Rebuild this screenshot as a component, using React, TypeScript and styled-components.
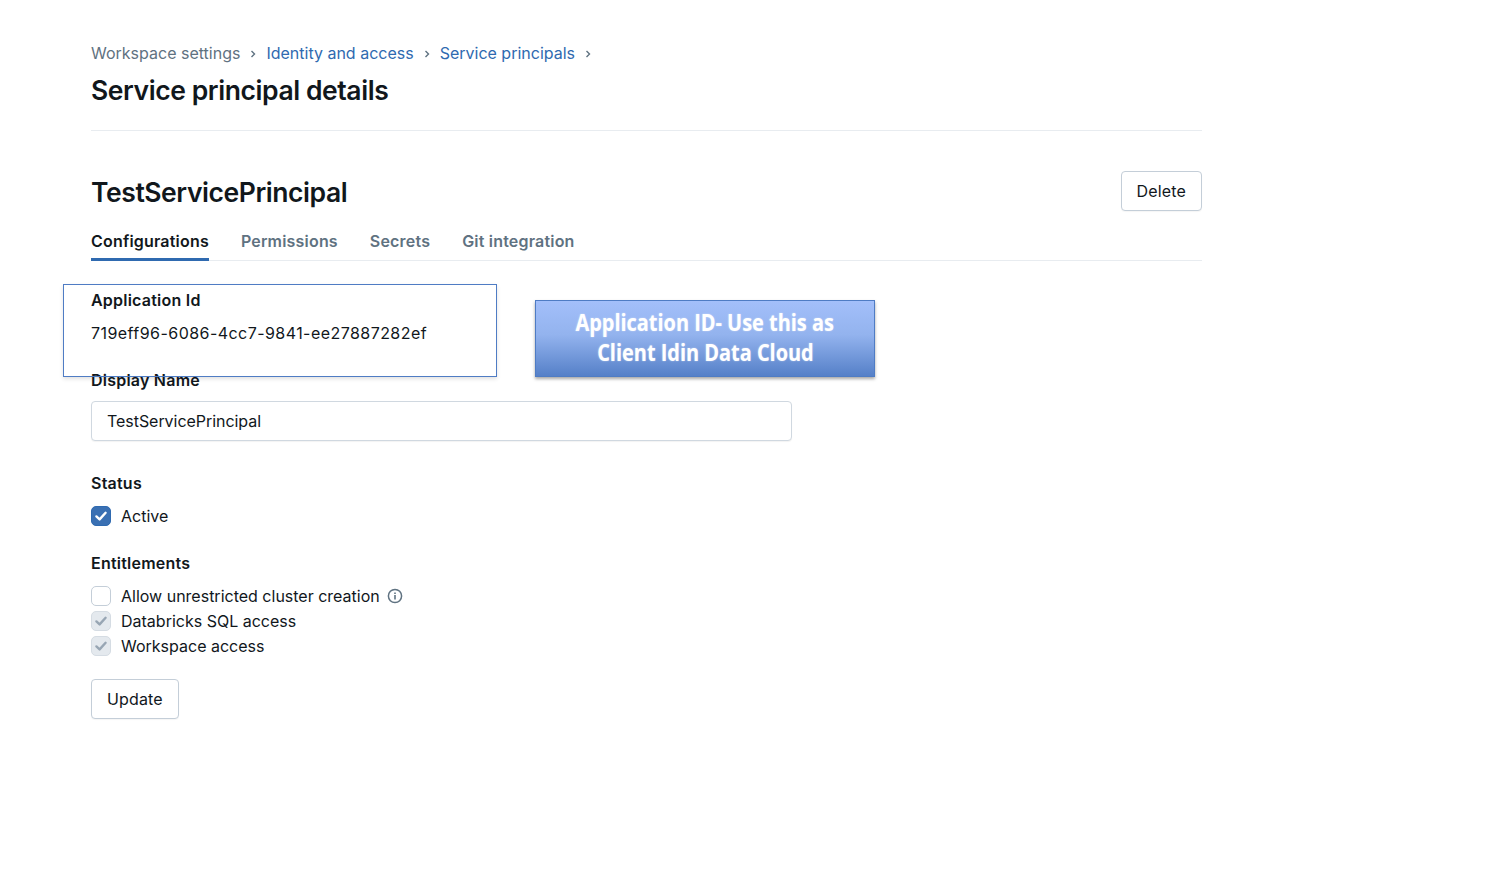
import React from "react";
import styled, { createGlobalStyle } from "styled-components";

const GlobalStyle = createGlobalStyle`
  html, body {
    margin: 0;
    padding: 0;
    background: #fff;
    font-family: "Inter", "Liberation Sans", sans-serif;
    color: #11171c;
  }
`;

const Page = styled.div`
  position: relative;
  box-sizing: border-box;
  width: 1490px;
  min-height: 884px;
  padding: 43px 288px 0 91px;
`;

const Breadcrumbs = styled.nav`
  display: flex;
  align-items: center;
  height: 20px;
  font-size: 16px;
  line-height: 20px;
`;

const Crumb = styled.span<{ $link?: boolean }>`
  color: ${(p) => (p.$link ? "#2f6ab0" : "#5f7281")};
`;

const CrumbSep = styled.svg`
  width: 8px;
  height: 8px;
  margin: 1px 9px 0 9px;
  fill: none;
  stroke: #5f7281;
  stroke-width: 1.4;
`;

const PageTitle = styled.h1`
  margin: 10px 0 0;
  font-size: 26.5px;
  line-height: 34px;
  font-weight: 600;
  letter-spacing: -0.016em;
`;

const Divider = styled.div`
  height: 1px;
  margin-top: 23px;
  background: #e8ecf0;
`;

const Header = styled.div`
  display: flex;
  align-items: center;
  justify-content: space-between;
  margin-top: 40px;
`;

const Name = styled.h2`
  margin: 1px 0 0;
  font-size: 26.5px;
  line-height: 38px;
  font-weight: 600;
  letter-spacing: -0.016em;
`;

const Button = styled.button`
  box-sizing: border-box;
  height: 40px;
  padding: 0 15px;
  background: #fff;
  border: 1px solid #c4ced8;
  border-radius: 4px;
  box-shadow: 0 1px 1px rgba(0, 0, 0, 0.04);
  font-family: inherit;
  font-size: 16px;
  letter-spacing: 0.01em;
  color: #11171c;
`;

const Tabs = styled.div`
  display: flex;
  gap: 32px;
  margin-top: 10px;
  height: 39px;
  border-bottom: 1px solid #e8ecf0;
`;

const Tab = styled.div<{ $active?: boolean }>`
  box-sizing: border-box;
  height: 40px;
  padding-top: 10px;
  font-size: 16px;
  line-height: 20px;
  font-weight: 600;
  letter-spacing: 0.012em;
  color: ${(p) => (p.$active ? "#11171c" : "#5f7281")};
  border-bottom: 3px solid ${(p) => (p.$active ? "#2f6ab0" : "transparent")};
`;

const Label = styled.div`
  font-size: 16px;
  line-height: 20px;
  font-weight: 600;
  letter-spacing: 0.014em;
`;

const IdSection = styled.section`
  margin-top: 29px;
`;

const IdValue = styled.div`
  margin-top: 13px;
  font-size: 16px;
  line-height: 20px;
  letter-spacing: 0.028em;
`;

const NameSection = styled.section`
  margin-top: 27px;
`;

const TextField = styled.input`
  display: block;
  box-sizing: border-box;
  width: 701px;
  height: 40px;
  margin-top: 11px;
  padding: 0 15px;
  border: 1px solid #d0d8e0;
  border-radius: 4px;
  box-shadow: 0 1px 1px rgba(0, 0, 0, 0.05);
  font-family: inherit;
  font-size: 16px;
  letter-spacing: -0.003em;
  color: #11171c;
`;

const StatusSection = styled.section`
  margin-top: 32px;
`;

const EntitlementSection = styled.section`
  margin-top: 27px;
`;

const CheckList = styled.div`
  display: flex;
  flex-direction: column;
  gap: 5px;
  margin-top: 13px;
`;

const CheckRow = styled.div`
  display: flex;
  align-items: center;
  gap: 10px;
  height: 20px;
  font-size: 16px;
  line-height: 20px;
`;

type CheckState = "on" | "off" | "disabled";

const Box = styled.span<{ $state: CheckState }>`
  box-sizing: border-box;
  display: flex;
  align-items: center;
  justify-content: center;
  width: 20px;
  height: 20px;
  border-radius: 5px;
  border: 1px solid
    ${(p) => (p.$state === "on" ? "#2f6ab0" : p.$state === "off" ? "#c4ced8" : "#d5dce3")};
  background: ${(p) => (p.$state === "on" ? "#3a70b3" : p.$state === "off" ? "#fff" : "#e4e9ee")};
  color: ${(p) => (p.$state === "on" ? "#fff" : "#98a6b4")};
`;

const CheckMark = styled.svg`
  width: 16px;
  height: 16px;
  fill: none;
  stroke: currentColor;
  stroke-width: 2.4;
  stroke-linecap: round;
  stroke-linejoin: round;
`;

const InfoIcon = styled.svg`
  width: 16px;
  height: 16px;
  margin-left: -3px;
  fill: none;
  stroke: #5f7281;
  stroke-width: 1.5;
`;

const UpdateButton = styled(Button)`
  display: block;
  margin-top: 23px;
`;

/* annotations pasted on top of the screenshot */
const Highlight = styled.div`
  position: absolute;
  left: 63px;
  top: 284px;
  box-sizing: border-box;
  width: 434px;
  height: 93px;
  border: 1px solid #4f7cc4;
  box-shadow: 0 2px 4px rgba(0, 0, 0, 0.12);
`;

const Callout = styled.div`
  position: absolute;
  left: 535px;
  top: 300px;
  box-sizing: border-box;
  width: 340px;
  height: 77px;
  padding-bottom: 4px;
  display: flex;
  flex-direction: column;
  align-items: center;
  justify-content: center;
  border: 1px solid #4f7cc4;
  background: linear-gradient(#a3bffa 0%, #93b3ee 45%, #5580c8 100%);
  box-shadow: 0 2px 3px rgba(0, 0, 0, 0.35);
  color: #fff;
  font-family: "Open Sans", "Liberation Sans", sans-serif;
  font-size: 24px;
  line-height: 30px;
  font-weight: 700;
  text-shadow: 0 0 2px rgba(255, 255, 255, 0.5);
`;

const CalloutLine = styled.span`
  display: block;
  white-space: nowrap;
  transform: scaleX(0.83);
`;

const Check = () => (
  <CheckMark viewBox="0 0 16 16">
    <path d="M3.4 8.4 6.6 11.4 12.6 4.8" />
  </CheckMark>
);

const Separator = () => (
  <CrumbSep viewBox="0 0 8 8">
    <path d="M2.5 1 5.5 4 2.5 7" />
  </CrumbSep>
);

export default function App() {
  return (
    <>
      <GlobalStyle />
      <Page>
        <Breadcrumbs>
          <Crumb>Workspace settings</Crumb>
          <Separator />
          <Crumb $link>Identity and access</Crumb>
          <Separator />
          <Crumb $link>Service principals</Crumb>
          <Separator />
        </Breadcrumbs>
        <PageTitle>Service principal details</PageTitle>
        <Divider />

        <Header>
          <Name>TestServicePrincipal</Name>
          <Button>Delete</Button>
        </Header>

        <Tabs>
          <Tab $active>Configurations</Tab>
          <Tab>Permissions</Tab>
          <Tab>Secrets</Tab>
          <Tab>Git integration</Tab>
        </Tabs>

        <IdSection>
          <Label>Application Id</Label>
          <IdValue>719eff96-6086-4cc7-9841-ee27887282ef</IdValue>
        </IdSection>

        <NameSection>
          <Label>Display Name</Label>
          <TextField defaultValue="TestServicePrincipal" />
        </NameSection>

        <StatusSection>
          <Label>Status</Label>
          <CheckList>
            <CheckRow>
              <Box $state="on">
                <Check />
              </Box>
              Active
            </CheckRow>
          </CheckList>
        </StatusSection>

        <EntitlementSection>
          <Label>Entitlements</Label>
          <CheckList>
            <CheckRow>
              <Box $state="off" />
              Allow unrestricted cluster creation
              <InfoIcon viewBox="0 0 16 16">
                <circle cx="8" cy="8" r="6.6" />
                <path d="M8 7v4.4" strokeWidth="1.6" />
                <path d="M8 4.4v1.5" strokeWidth="1.6" />
              </InfoIcon>
            </CheckRow>
            <CheckRow>
              <Box $state="disabled">
                <Check />
              </Box>
              Databricks SQL access
            </CheckRow>
            <CheckRow>
              <Box $state="disabled">
                <Check />
              </Box>
              Workspace access
            </CheckRow>
          </CheckList>
        </EntitlementSection>

        <UpdateButton>Update</UpdateButton>

        <Highlight />
        <Callout>
          <CalloutLine>Application ID- Use this as</CalloutLine>
          <CalloutLine>Client Idin Data Cloud</CalloutLine>
        </Callout>
      </Page>
    </>
  );
}
